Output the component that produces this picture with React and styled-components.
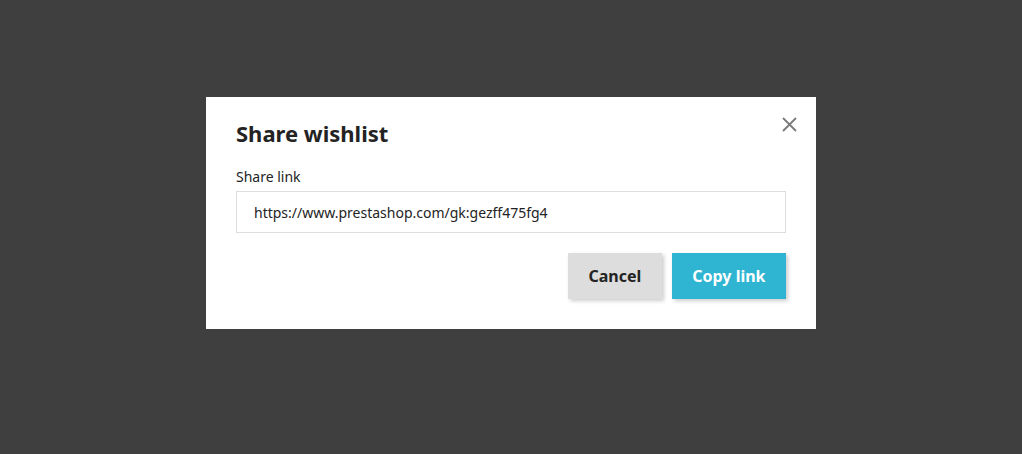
import React from "react";
import styled, { createGlobalStyle } from "styled-components";

const Global = createGlobalStyle`
  html, body {
    margin: 0;
    padding: 0;
    background: #3f3f3f;
    font-family: "Noto Sans", "Open Sans", sans-serif;
    color: #232323;
  }
`;

const Backdrop = styled.div`
  height: 454px;
  display: flex;
  justify-content: center;
  align-items: flex-start;
  padding-top: 97px;
  box-sizing: border-box;
`;

const Modal = styled.div`
  position: relative;
  width: 610px;
  box-sizing: border-box;
  background: #fff;
  padding: 20px 30px 30px;
  display: flex;
  flex-direction: column;
`;

const Title = styled.h2`
  margin: 0;
  font-size: 22px;
  font-weight: 700;
  line-height: 32px;
  color: #232323;
`;

const Close = styled.button`
  position: absolute;
  top: 17px;
  right: 17px;
  width: 20px;
  height: 20px;
  padding: 0;
  border: 0;
  background: none;
  display: flex;
  align-items: center;
  justify-content: center;
  cursor: pointer;
`;

const Label = styled.label`
  margin-top: 18px;
  font-size: 14px;
  line-height: 20px;
  color: #232323;
`;

const Input = styled.input`
  flex-shrink: 0;
  margin-top: 4px;
  height: 42px;
  box-sizing: border-box;
  border: 1px solid #dddddd;
  padding: 0 17px;
  font-family: inherit;
  font-size: 14px;
  color: #232323;
  outline: none;
`;

const Actions = styled.div`
  margin-top: 20px;
  display: flex;
  justify-content: flex-end;
  gap: 10px;
`;

const Button = styled.button`
  height: 46px;
  padding: 0 20.5px;
  border: 0;
  font-family: inherit;
  font-size: 16px;
  font-weight: 700;
  background: ${(p) => (p.$primary ? "#2fb5d2" : "#dddddd")};
  color: ${(p) => (p.$primary ? "#ffffff" : "#232323")};
  box-shadow: 2px 2px 4px 0 rgba(0, 0, 0, 0.2);
  cursor: pointer;
`;

export default function App() {
  return (
    <>
      <Global />
      <Backdrop>
        <Modal>
          <Title>Share wishlist</Title>
          <Close aria-label="Close">
            <svg width="15" height="15" viewBox="0 0 15 15">
              <path
                d="M1 1 L14 14 M14 1 L1 14"
                stroke="#7a7a7a"
                strokeWidth="1.8"
                fill="none"
              />
            </svg>
          </Close>
          <Label>Share link</Label>
          <Input readOnly value="https://www.prestashop.com/gk:gezff475fg4" />
          <Actions>
            <Button>Cancel</Button>
            <Button $primary>Copy link</Button>
          </Actions>
        </Modal>
      </Backdrop>
    </>
  );
}
